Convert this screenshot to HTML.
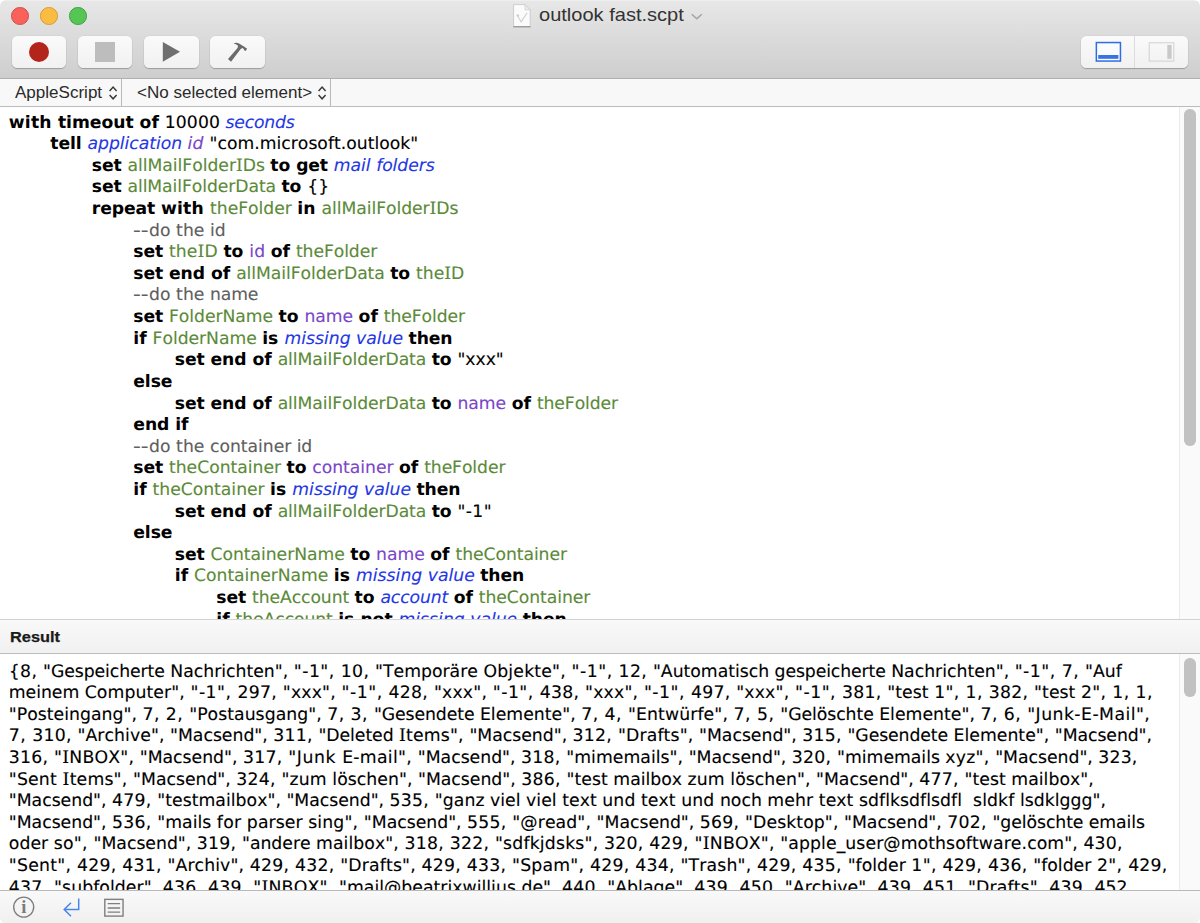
<!DOCTYPE html>
<html lang="en">
<head>
<meta charset="utf-8">
<title>outlook fast.scpt</title>
<style>
*{box-sizing:border-box;margin:0;padding:0}
html,body{width:1200px;height:923px;background:#fff;overflow:hidden}
body{position:relative;font-family:"Liberation Sans",sans-serif;color:#000}
#win{position:absolute;left:0;top:0;width:1200px;height:923px;border-radius:6px 6px 5.500px 5.500px;overflow:hidden;background:#fff}
#tb{position:absolute;left:0;top:0;width:1200px;height:79px;background:linear-gradient(#f2f2f2 0,#e7e7e7 1.500px,#dedede 28px,#cecece 78px);border-bottom:1px solid #b0b0b0}
.tl{position:absolute;top:7.100px;width:17.500px;height:17.500px;border-radius:50%}
#title{position:absolute;left:539px;top:3px;font-size:18.600px;line-height:24px;color:#333;white-space:pre;transform:scaleX(1.078);transform-origin:0 0}
.btn{position:absolute;top:36.100px;height:31.500px;width:54.600px;border-radius:5.500px;background:linear-gradient(#fafafa,#f1f1f1);box-shadow:0 1px 1px rgba(0,0,0,.24),0 0 0 .5px rgba(0,0,0,.05)}
#seg{position:absolute;left:1080.500px;top:36px;width:107.500px;height:31.700px;border-radius:5.500px;background:linear-gradient(#fafafa,#f1f1f1);box-shadow:0 1px 1px rgba(0,0,0,.24),0 0 0 .5px rgba(0,0,0,.05)}
#nav{position:absolute;left:0;top:79px;width:1200px;height:28px;background:#f8f8f8;border-bottom:1px solid #bcbcbc;font-size:15.800px;color:#2a2a2a}
#nav span{position:absolute;top:4px;line-height:19px;white-space:pre;transform:scaleX(1.078);transform-origin:0 0}
#nav .ud{position:absolute;top:6px}
#nav .vs{position:absolute;top:0;width:1px;height:27px;background:#b9b9b9}
#code{position:absolute;left:0;top:107px;width:1184px;height:513px;background:#fff;overflow:hidden;font-size:17.2px}
#code,#res{font-family:"DejaVu Sans","Liberation Sans",sans-serif;font-kerning:none;font-variant-ligatures:none;text-rendering:geometricPrecision}
.l{position:absolute;left:0;height:22px;line-height:22px;white-space:pre;-webkit-text-stroke:.12px}
.l b{font-weight:bold;color:#000;-webkit-text-stroke:0}
.l i{font-style:italic;color:#1f37e6}
.l em{font-style:italic;color:#7a45c9}
.l u{text-decoration:none;color:#7a45c9}
.l s{text-decoration:none;color:#5b8a38}
.l q{quotes:none;color:#5e5e5e}
.l q:before,.l q:after{content:none}
.l a{font-family:"DejaVu Serif","Liberation Serif",serif}
.l .hy{display:inline-block;transform:scaleX(1.257);transform-origin:0 50%;margin-right:3.200px}
.sb{position:absolute;left:1179px;width:21px;background:#fafafa;border-left:1px solid #ebebeb}
.th{position:absolute;left:4.300px;width:11.300px;border-radius:5.650px;background:#c1c1c1}
#rh{position:absolute;left:0;top:619px;width:1200px;height:35px;background:linear-gradient(#f9f9f9,#f1f1f1);border-top:1.500px solid #d2d2d2;border-bottom:1.500px solid #bcbcbc}
#rh span{position:absolute;left:9.800px;top:8px;font-size:15.100px;line-height:18px;font-weight:bold;color:#1a1a1a;-webkit-text-stroke:.25px;transform:scaleX(1.085);transform-origin:0 0}
#res{position:absolute;left:0;top:654px;width:1184px;height:236px;background:#fff;overflow:hidden;font-size:17.275px}
#bb{position:absolute;left:0;top:890px;width:1200px;height:33px;background:linear-gradient(#f9f9f9,#f0f0f0);border-top:1px solid #b9b9b9}
</style>
</head>
<body>
<div id="win">
<div id="tb">
<div class="tl" style="left:11.300px;background:#f9615b;border:1px solid #d24f49"></div>
<div class="tl" style="left:40.200px;background:#fbbd41;border:1px solid #d59c34"></div>
<div class="tl" style="left:69.100px;background:#55c653;border:1px solid #3f9f42"></div>
<svg id="doc" width="19" height="25" viewBox="0 0 19 25" style="position:absolute;left:512.500px;top:3.800px"><path d="M.6 .6H12l5.200 5.300V22.700H.6z" fill="#fbfbfb" stroke="#c4c4c4" stroke-width=".8"/><path d="M12 .6v5.300h5.200z" fill="#ececec" stroke="#cdcdcd" stroke-width=".7"/><path d="M.3 22.800h17.300" stroke="#7d7d7d" stroke-width=".9"/><path d="M4.300 11.300l3.800 6.600 6-9" fill="none" stroke="#d3d3d3" stroke-width="1.200"/><circle cx="4.800" cy="11.400" r="1.200" fill="#cbcbcb"/></svg>
<div id="title">outlook fast.scpt</div>
<svg width="14" height="9" viewBox="0 0 14 9" style="position:absolute;left:690px;top:12px"><path d="M1.800 2.200l5 4.500 5-4.500" fill="none" stroke="#a3a3a3" stroke-width="1.500"/></svg>
<div class="btn" style="left:11.800px"><div style="position:absolute;left:16.900px;top:5.500px;width:20.200px;height:20.200px;border-radius:50%;background:#b3251a"></div></div>
<div class="btn" style="left:77.900px"><div style="position:absolute;left:17px;top:6px;width:20px;height:20px;background:#bdbdbd"></div></div>
<div class="btn" style="left:144.100px"><svg width="54" height="31" style="position:absolute;left:0;top:0"><path d="M18.800 5.900v19.800L36 15.700z" fill="#6f6f6f"/></svg></div>
<div class="btn" style="left:210.200px"><svg width="54" height="31" viewBox="0 0 54 31" style="position:absolute;left:0;top:0"><path d="M18 23.100L21 25.700 30.700 13 32.300 12Q33.300 12.600 33.800 13.300L34.600 14.700 36 14.700 37.100 12.500 36 12Q34.500 10.800 32.700 9.750 31 8.600 29.500 7.800 27.800 6.900 26.200 6.800 24.500 6.800 23.200 7.300 25 7.800 26.200 8.450 27.400 9 27.900 9.750 28 11 27.500 12Z" fill="#6b6b6b"/></svg></div>
<div id="seg"><svg width="108" height="32" viewBox="0 0 108 32" style="position:absolute;left:0;top:0"><path d="M53.500 0v32" stroke="#dcdcdc" stroke-width="1"/><rect x="15.350" y="6.550" width="24.100" height="18.500" fill="#fafbff" stroke="#2f6de0" stroke-width="1.500"/><rect x="17.200" y="19" width="20.200" height="3.800" fill="#3873e6"/><rect x="68.200" y="6.800" width="24.600" height="18.300" fill="none" stroke="#d0d0d0" stroke-width="1"/><rect x="86.300" y="8.900" width="4.300" height="13.900" fill="#c9c9c9"/></svg></div>
</div>
<div id="nav"><span style="left:14.800px">AppleScript</span><svg class="ud" style="left:108px" width="11" height="16" viewBox="0 0 11 16"><path d="M1.600 5.900l3.500-3.800 3.500 3.800M1.600 10l3.500 3.800L8.600 10" fill="none" stroke="#3a3a3a" stroke-width="1.500"/></svg><div class="vs" style="left:121px"></div><span style="left:136.800px">&lt;No selected element&gt;</span><svg class="ud" style="left:316.500px" width="11" height="16" viewBox="0 0 11 16"><path d="M1.600 5.900l3.500-3.800 3.500 3.800M1.600 10l3.500 3.800L8.600 10" fill="none" stroke="#3a3a3a" stroke-width="1.500"/></svg><div class="vs" style="left:330px"></div></div>
<div id="code">
<div class="l" style="top:5px;left:8.8px"><b style="letter-spacing:.18px">with </b><b style="letter-spacing:-.03px">timeout </b><b style="letter-spacing:-.02px">of </b><span style="letter-spacing:.09px">10000 </span><i style="letter-spacing:-.16px">seconds</i></div>
<div class="l" style="top:26px;left:50.3px"><b style="letter-spacing:-.08px">tell </b><i style="letter-spacing:-.03px">application </i><em style="letter-spacing:.31px">id </em><span style="letter-spacing:.02px">"com.microsoft.outlook"</span></div>
<div class="l" style="top:48px;left:91.8px"><b style="letter-spacing:-.1px">set </b><s style="letter-spacing:-.02px">allMailFolder<a>I</a>Ds </s><b style="letter-spacing:-.07px">to </b><b style="letter-spacing:-.17px">get </b><i style="letter-spacing:.05px">mail </i><i style="letter-spacing:-.06px">folders</i></div>
<div class="l" style="top:69px;left:91.8px"><b style="letter-spacing:-.1px">set </b><s style="letter-spacing:-.07px">allMailFolderData </s><b style="letter-spacing:-.07px">to </b><span style="letter-spacing:-.02px">{}</span></div>
<div class="l" style="top:91px;left:91.8px"><b style="letter-spacing:-.11px">repeat </b><b style="letter-spacing:.18px">with </b><s style="letter-spacing:-.01px">theFolder </s><b style="letter-spacing:.05px">in </b><s style="letter-spacing:-.06px">allMailFolder<a>I</a>Ds</s></div>
<div class="l" style="top:113px;left:133.3px"><q class="hy">--</q><q style="letter-spacing:.1px">do </q><q style="letter-spacing:.07px">the </q><q style="letter-spacing:-.13px">id</q></div>
<div class="l" style="top:134px;left:133.3px"><b style="letter-spacing:-.1px">set </b><s style="letter-spacing:.12px">the<a>I</a>D </s><b style="letter-spacing:-.07px">to </b><u style="letter-spacing:.11px">id </u><b style="letter-spacing:-.02px">of </b><s style="letter-spacing:-.08px">theFolder</s></div>
<div class="l" style="top:156px;left:133.3px"><b style="letter-spacing:-.1px">set </b><b style="letter-spacing:-.06px">end </b><b style="letter-spacing:-.02px">of </b><s style="letter-spacing:-.07px">allMailFolderData </s><b style="letter-spacing:-.07px">to </b><s style="letter-spacing:.03px">the<a>I</a>D</s></div>
<div class="l" style="top:177px;left:133.3px"><q class="hy">--</q><q style="letter-spacing:.1px">do </q><q style="letter-spacing:.07px">the </q><q style="letter-spacing:-.14px">name</q></div>
<div class="l" style="top:199px;left:133.3px"><b style="letter-spacing:-.1px">set </b><s style="letter-spacing:-.03px">FolderName </s><b style="letter-spacing:-.07px">to </b><u>name </u><b style="letter-spacing:-.02px">of </b><s style="letter-spacing:-.08px">theFolder</s></div>
<div class="l" style="top:221px;left:133.3px"><b style="letter-spacing:-.03px">if </b><s style="letter-spacing:-.03px">FolderName </s><b style="letter-spacing:.04px">is </b><i style="letter-spacing:.03px">missing </i><i>value </i><b style="letter-spacing:-.09px">then</b></div>
<div class="l" style="top:242px;left:174.8px"><b style="letter-spacing:-.1px">set </b><b style="letter-spacing:-.06px">end </b><b style="letter-spacing:-.02px">of </b><s style="letter-spacing:-.07px">allMailFolderData </s><b style="letter-spacing:-.07px">to </b><span>"xxx"</span></div>
<div class="l" style="top:264px;left:133.3px"><b style="letter-spacing:-.08px">else</b></div>
<div class="l" style="top:286px;left:174.8px"><b style="letter-spacing:-.1px">set </b><b style="letter-spacing:-.06px">end </b><b style="letter-spacing:-.02px">of </b><s style="letter-spacing:-.07px">allMailFolderData </s><b style="letter-spacing:-.07px">to </b><u>name </u><b style="letter-spacing:-.02px">of </b><s style="letter-spacing:-.08px">theFolder</s></div>
<div class="l" style="top:307px;left:133.3px"><b style="letter-spacing:-.06px">end </b><b style="letter-spacing:-.08px">if</b></div>
<div class="l" style="top:329px;left:133.3px"><q class="hy">--</q><q style="letter-spacing:.1px">do </q><q style="letter-spacing:.07px">the </q><q style="letter-spacing:-.03px">container </q><q style="letter-spacing:-.13px">id</q></div>
<div class="l" style="top:350px;left:133.3px"><b style="letter-spacing:-.1px">set </b><s style="letter-spacing:-.01px">theContainer </s><b style="letter-spacing:-.07px">to </b><u style="letter-spacing:-.03px">container </u><b style="letter-spacing:-.02px">of </b><s style="letter-spacing:-.08px">theFolder</s></div>
<div class="l" style="top:372px;left:133.3px"><b style="letter-spacing:-.03px">if </b><s style="letter-spacing:-.01px">theContainer </s><b style="letter-spacing:.04px">is </b><i style="letter-spacing:.03px">missing </i><i>value </i><b style="letter-spacing:-.09px">then</b></div>
<div class="l" style="top:394px;left:174.8px"><b style="letter-spacing:-.1px">set </b><b style="letter-spacing:-.06px">end </b><b style="letter-spacing:-.02px">of </b><s style="letter-spacing:-.07px">allMailFolderData </s><b style="letter-spacing:-.07px">to </b><span style="letter-spacing:.39px">"-1"</span></div>
<div class="l" style="top:415px;left:133.3px"><b style="letter-spacing:-.08px">else</b></div>
<div class="l" style="top:437px;left:174.8px"><b style="letter-spacing:-.1px">set </b><s style="letter-spacing:-.03px">ContainerName </s><b style="letter-spacing:-.07px">to </b><u>name </u><b style="letter-spacing:-.02px">of </b><s style="letter-spacing:-.06px">theContainer</s></div>
<div class="l" style="top:458px;left:174.8px"><b style="letter-spacing:-.03px">if </b><s style="letter-spacing:-.03px">ContainerName </s><b style="letter-spacing:.04px">is </b><i style="letter-spacing:.03px">missing </i><i>value </i><b style="letter-spacing:-.09px">then</b></div>
<div class="l" style="top:480px;left:216.3px"><b style="letter-spacing:-.1px">set </b><s style="letter-spacing:-.07px">theAccount </s><b style="letter-spacing:-.07px">to </b><i style="letter-spacing:-.09px">account </i><b style="letter-spacing:-.02px">of </b><s style="letter-spacing:-.06px">theContainer</s></div>
<div class="l" style="top:502px;left:216.3px"><b style="letter-spacing:-.03px">if </b><s style="letter-spacing:-.07px">theAccount </s><b style="letter-spacing:.04px">is </b><b style="letter-spacing:-.03px">not </b><i style="letter-spacing:.03px">missing </i><i>value </i><b style="letter-spacing:-.09px">then</b></div>
</div><!--/code-->
<div class="sb" style="top:107px;height:513px"><div class="th" style="top:2.200px;height:336.800px"></div></div>
<div id="rh"><span>Result</span></div>
<div id="res">
<div class="l" style="top:7px;left:8.8px"><span style="letter-spacing:.34px">{8, </span><span style="letter-spacing:-.09px">"Gespeicherte </span><span>Nachrichten", </span><span style="letter-spacing:.49px">"-1", </span><span style="letter-spacing:.34px">10, </span><span>"Temporäre </span><span style="letter-spacing:.19px">Objekte", </span><span style="letter-spacing:.49px">"-1", </span><span style="letter-spacing:.34px">12, </span><span style="letter-spacing:-.02px">"Automatisch </span><span style="letter-spacing:-.11px">gespeicherte </span><span>Nachrichten", </span><span style="letter-spacing:.49px">"-1", </span><span style="letter-spacing:.46px">7, </span><span style="letter-spacing:-.01px">"Auf</span></div>
<div class="l" style="top:28px;left:8.8px"><span style="letter-spacing:-.03px">meinem </span><span style="letter-spacing:.09px">Computer", </span><span style="letter-spacing:.49px">"-1", </span><span style="letter-spacing:.27px">297, </span><span style="letter-spacing:.19px">"xxx", </span><span style="letter-spacing:.49px">"-1", </span><span style="letter-spacing:.27px">428, </span><span style="letter-spacing:.19px">"xxx", </span><span style="letter-spacing:.49px">"-1", </span><span style="letter-spacing:.27px">438, </span><span style="letter-spacing:.19px">"xxx", </span><span style="letter-spacing:.49px">"-1", </span><span style="letter-spacing:.27px">497, </span><span style="letter-spacing:.19px">"xxx", </span><span style="letter-spacing:.49px">"-1", </span><span style="letter-spacing:.27px">381, </span><span style="letter-spacing:.05px">"test </span><span style="letter-spacing:.34px">1", </span><span style="letter-spacing:.46px">1, </span><span style="letter-spacing:.27px">382, </span><span style="letter-spacing:.05px">"test </span><span style="letter-spacing:.34px">2", </span><span style="letter-spacing:.46px">1, </span><span style="letter-spacing:.4px">1,</span></div>
<div class="l" style="top:50px;left:8.8px"><span style="letter-spacing:.02px">"Posteingang", </span><span style="letter-spacing:.46px">7, </span><span style="letter-spacing:.46px">2, </span><span style="letter-spacing:.03px">"Postausgang", </span><span style="letter-spacing:.46px">7, </span><span style="letter-spacing:.46px">3, </span><span style="letter-spacing:-.09px">"Gesendete </span><span style="letter-spacing:.03px">Elemente", </span><span style="letter-spacing:.46px">7, </span><span style="letter-spacing:.46px">4, </span><span style="letter-spacing:.11px">"Entwürfe", </span><span style="letter-spacing:.46px">7, </span><span style="letter-spacing:.46px">5, </span><span style="letter-spacing:-.07px">"Gelöschte </span><span style="letter-spacing:.03px">Elemente", </span><span style="letter-spacing:.46px">7, </span><span style="letter-spacing:.46px">6, </span><span style="letter-spacing:.45px">"Junk-E-Mail",</span></div>
<div class="l" style="top:71px;left:8.8px"><span style="letter-spacing:.46px">7, </span><span style="letter-spacing:.27px">310, </span><span style="letter-spacing:.07px">"Archive", </span><span style="letter-spacing:-.02px">"Macsend", </span><span style="letter-spacing:.27px">311, </span><span style="letter-spacing:-.07px">"Deleted </span><span style="letter-spacing:.19px"><a>I</a>tems", </span><span style="letter-spacing:-.02px">"Macsend", </span><span style="letter-spacing:.27px">312, </span><span style="letter-spacing:.15px">"Drafts", </span><span style="letter-spacing:-.02px">"Macsend", </span><span style="letter-spacing:.27px">315, </span><span style="letter-spacing:-.09px">"Gesendete </span><span style="letter-spacing:.03px">Elemente", </span><span style="letter-spacing:-.08px">"Macsend",</span></div>
<div class="l" style="top:93px;left:8.8px"><span style="letter-spacing:.27px">316, </span><span style="letter-spacing:.2px">"<a>I</a>NBOX", </span><span style="letter-spacing:-.02px">"Macsend", </span><span style="letter-spacing:.27px">317, </span><span style="letter-spacing:.59px">"Junk </span><span style="letter-spacing:.29px">E-mail", </span><span style="letter-spacing:-.02px">"Macsend", </span><span style="letter-spacing:.27px">318, </span><span style="letter-spacing:.04px">"mimemails", </span><span style="letter-spacing:-.02px">"Macsend", </span><span style="letter-spacing:.27px">320, </span><span style="letter-spacing:-.02px">"mimemails </span><span style="letter-spacing:.23px">xyz", </span><span style="letter-spacing:-.02px">"Macsend", </span><span style="letter-spacing:.2px">323,</span></div>
<div class="l" style="top:115px;left:8.8px"><span style="letter-spacing:.18px">"Sent </span><span style="letter-spacing:.19px"><a>I</a>tems", </span><span style="letter-spacing:-.02px">"Macsend", </span><span style="letter-spacing:.27px">324, </span><span style="letter-spacing:.11px">"zum </span><span style="letter-spacing:.04px">löschen", </span><span style="letter-spacing:-.02px">"Macsend", </span><span style="letter-spacing:.27px">386, </span><span style="letter-spacing:.05px">"test </span><span style="letter-spacing:-.01px">mailbox </span><span style="letter-spacing:.14px">zum </span><span style="letter-spacing:.04px">löschen", </span><span style="letter-spacing:-.02px">"Macsend", </span><span style="letter-spacing:.27px">477, </span><span style="letter-spacing:.05px">"test </span><span style="letter-spacing:.02px">mailbox",</span></div>
<div class="l" style="top:136px;left:8.8px"><span style="letter-spacing:-.02px">"Macsend", </span><span style="letter-spacing:.27px">479, </span><span style="letter-spacing:.03px">"testmailbox", </span><span style="letter-spacing:-.02px">"Macsend", </span><span style="letter-spacing:.27px">535, </span><span style="letter-spacing:.03px">"ganz </span><span style="letter-spacing:.03px">viel </span><span style="letter-spacing:.03px">viel </span><span style="letter-spacing:.06px">text </span><span style="letter-spacing:.09px">und </span><span style="letter-spacing:.06px">text </span><span style="letter-spacing:.09px">und </span><span>noch </span><span style="letter-spacing:.1px">mehr </span><span style="letter-spacing:.06px">text </span><span style="letter-spacing:.04px">sdflksdflsdfl  </span><span style="letter-spacing:.09px">sldkf </span><span style="letter-spacing:.01px">lsdklggg",</span></div>
<div class="l" style="top:158px;left:8.8px"><span style="letter-spacing:-.02px">"Macsend", </span><span style="letter-spacing:.27px">536, </span><span style="letter-spacing:.03px">"mails </span><span style="letter-spacing:.19px">for </span><span style="letter-spacing:.06px">parser </span><span style="letter-spacing:.16px">sing", </span><span style="letter-spacing:-.02px">"Macsend", </span><span style="letter-spacing:.27px">555, </span><span style="letter-spacing:.1px">"@read", </span><span style="letter-spacing:-.02px">"Macsend", </span><span style="letter-spacing:.27px">569, </span><span style="letter-spacing:.09px">"Desktop", </span><span style="letter-spacing:-.02px">"Macsend", </span><span style="letter-spacing:.27px">702, </span><span style="letter-spacing:-.08px">"gelöschte </span><span style="letter-spacing:-.11px">emails</span></div>
<div class="l" style="top:179px;left:8.8px"><span style="letter-spacing:.05px">oder </span><span style="letter-spacing:.26px">so", </span><span style="letter-spacing:-.02px">"Macsend", </span><span style="letter-spacing:.27px">319, </span><span style="letter-spacing:-.03px">"andere </span><span style="letter-spacing:.07px">mailbox", </span><span style="letter-spacing:.27px">318, </span><span style="letter-spacing:.27px">322, </span><span style="letter-spacing:.19px">"sdfkjdsks", </span><span style="letter-spacing:.27px">320, </span><span style="letter-spacing:.27px">429, </span><span style="letter-spacing:.2px">"<a>I</a>NBOX", </span><span style="letter-spacing:.08px">"apple_user@mothsoftware.com", </span><span style="letter-spacing:.2px">430,</span></div>
<div class="l" style="top:201px;left:8.8px"><span style="letter-spacing:.24px">"Sent", </span><span style="letter-spacing:.27px">429, </span><span style="letter-spacing:.27px">431, </span><span style="letter-spacing:.1px">"Archiv", </span><span style="letter-spacing:.27px">429, </span><span style="letter-spacing:.27px">432, </span><span style="letter-spacing:.15px">"Drafts", </span><span style="letter-spacing:.27px">429, </span><span style="letter-spacing:.27px">433, </span><span style="letter-spacing:.22px">"Spam", </span><span style="letter-spacing:.27px">429, </span><span style="letter-spacing:.27px">434, </span><span style="letter-spacing:.17px">"Trash", </span><span style="letter-spacing:.27px">429, </span><span style="letter-spacing:.27px">435, </span><span style="letter-spacing:.02px">"folder </span><span style="letter-spacing:.34px">1", </span><span style="letter-spacing:.27px">429, </span><span style="letter-spacing:.27px">436, </span><span style="letter-spacing:.02px">"folder </span><span style="letter-spacing:.34px">2", </span><span style="letter-spacing:.2px">429,</span></div>
<div class="l" style="top:223px;left:8.8px"><span style="letter-spacing:.27px">437, </span><span style="letter-spacing:.06px">"subfolder", </span><span style="letter-spacing:.27px">436, </span><span style="letter-spacing:.27px">439, </span><span style="letter-spacing:.2px">"<a>I</a>NBOX", </span><span style="letter-spacing:.02px">"mail@beatrixwillius.de", </span><span style="letter-spacing:.27px">440, </span><span style="letter-spacing:.03px">"Ablage", </span><span style="letter-spacing:.27px">439, </span><span style="letter-spacing:.27px">450, </span><span style="letter-spacing:.07px">"Archive", </span><span style="letter-spacing:.27px">439, </span><span style="letter-spacing:.27px">451, </span><span style="letter-spacing:.15px">"Drafts", </span><span style="letter-spacing:.27px">439, </span><span>452</span></div>
</div><!--/res-->
<div class="sb" style="top:654px;height:236px"><div class="th" style="top:4.200px;height:38.500px"></div></div>
<div id="bb">
<svg width="140" height="33" viewBox="0 0 140 33" style="position:absolute;left:0;top:-.9px"><circle cx="23.700" cy="17.100" r="10" fill="none" stroke="#7f7f7f" stroke-width="1.400"/><text x="23.700" y="23.400" text-anchor="middle" font-family="Liberation Serif,serif" font-weight="bold" font-size="18.500" fill="#7b7b7b">i</text><path d="M78.700 8.500v11H64.500M71 12.800l-6.800 6.700 6.800 6.700" fill="none" stroke="#4a86ea" stroke-width="1.500"/><rect x="104.800" y="9.350" width="18.250" height="16.750" fill="none" stroke="#7f7f7f" stroke-width="1.400"/><path d="M107.700 13.650h12.400M107.700 18h12.400M107.700 22.150h12.400" stroke="#7f7f7f" stroke-width="1.400"/></svg>
</div>
</div>
</body>
</html>
